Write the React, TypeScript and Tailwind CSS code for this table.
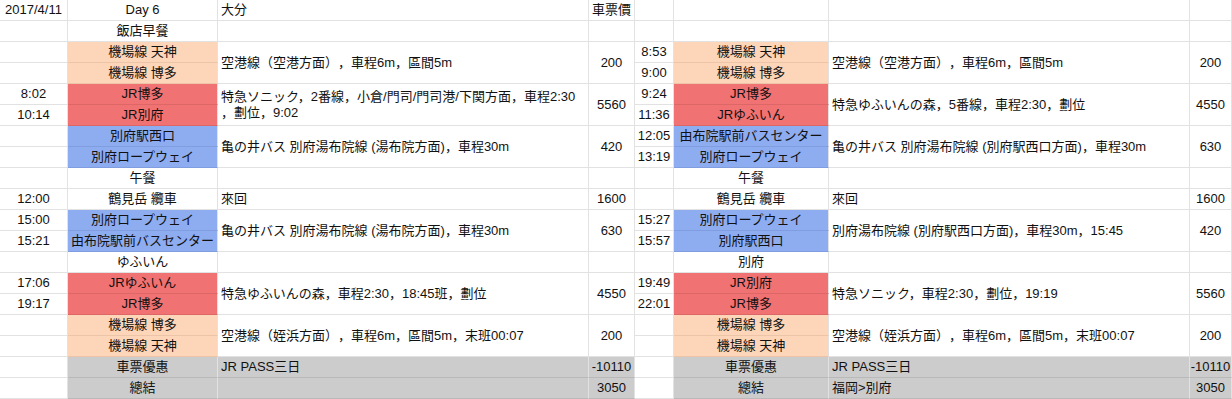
import React from 'react';

type Tone = 'none' | 'peach' | 'red' | 'blue' | 'gray';

type CellProps = {
  text?: React.ReactNode;
  tone?: Tone;
  span?: boolean;
  left?: boolean;
};

const tones: Record<Tone, string> = {
  none: 'bg-white border-[#e2e2e2]',
  peach: 'bg-[#fdd5b8] border-[#ecc4a8]',
  red: 'bg-[#f17272] border-[#dd6666]',
  blue: 'bg-[#8eacf0] border-[#7f9ddf]',
  gray: 'bg-[#cccccc] border-[#b9b9b9]',
};

const Cell = ({ text = '', tone = 'none', span = false, left = false }: CellProps) => (
  <div
    className={`${span ? 'row-span-2' : ''} ${tones[tone]} border-r border-b border-r-[#e2e2e2] flex items-center overflow-hidden whitespace-nowrap leading-[16px] ${
      left ? 'justify-start pl-[3px]' : 'justify-center'
    }`}
  >
    <span className="text-[13px] text-[#111] [text-spacing-trim:space-all]">{text}</span>
  </div>
);

const blank = () => <Cell />;

const Sheet = () => {
  return (
    <div
      className="grid grid-cols-[68px_150px_371px_46px_39px_155px_361px_42px] grid-rows-[repeat(19,21px)] bg-white w-[1232px] h-[399px] overflow-hidden"
      style={{ fontFamily: '"Liberation Sans", Arial, "Noto Sans CJK JP", "Noto Sans CJK TC", sans-serif' }}
    >
      {/* header */}
      <Cell text="2017/4/11" />
      <Cell text="Day 6" />
      <Cell text="大分" left />
      <Cell text="車票價" />
      {blank()}
      {blank()}
      {blank()}
      {blank()}

      {/* breakfast */}
      {blank()}
      <Cell text="飯店早餐" />
      {blank()}
      {blank()}
      {blank()}
      {blank()}
      {blank()}
      {blank()}

      {/* airport line */}
      {blank()}
      <Cell text="機場線 天神" tone="peach" />
      <Cell text="空港線（空港方面），車程6m，區間5m" left span />
      <Cell text="200" span />
      <Cell text="8:53" />
      <Cell text="機場線 天神" tone="peach" />
      <Cell text="空港線（空港方面），車程6m，區間5m" left span />
      <Cell text="200" span />
      {blank()}
      <Cell text="機場線 博多" tone="peach" />
      <Cell text="9:00" />
      <Cell text="機場線 博多" tone="peach" />

      {/* JR */}
      <Cell text="8:02" />
      <Cell text="JR博多" tone="red" />
      <Cell
        text={
          <>
            特急ソニック，2番線，小倉/門司/門司港/下関方面，車程2:30
            <br />
            ，劃位，9:02
          </>
        }
        left
        span
      />
      <Cell text="5560" span />
      <Cell text="9:24" />
      <Cell text="JR博多" tone="red" />
      <Cell text="特急ゆふいんの森，5番線，車程2:30，劃位" left span />
      <Cell text="4550" span />
      <Cell text="10:14" />
      <Cell text="JR別府" tone="red" />
      <Cell text="11:36" />
      <Cell text="JRゆふいん" tone="red" />

      {/* bus */}
      {blank()}
      <Cell text="別府駅西口" tone="blue" />
      <Cell text="亀の井バス 別府湯布院線 (湯布院方面)，車程30m" left span />
      <Cell text="420" span />
      <Cell text="12:05" />
      <Cell text="由布院駅前バスセンター" tone="blue" />
      <Cell text="亀の井バス 別府湯布院線 (別府駅西口方面)，車程30m" left span />
      <Cell text="630" span />
      {blank()}
      <Cell text="別府ロープウェイ" tone="blue" />
      <Cell text="13:19" />
      <Cell text="別府ロープウェイ" tone="blue" />

      {/* lunch */}
      {blank()}
      <Cell text="午餐" />
      {blank()}
      {blank()}
      {blank()}
      <Cell text="午餐" />
      {blank()}
      {blank()}

      {/* ropeway */}
      <Cell text="12:00" />
      <Cell text="鶴見岳 纜車" />
      <Cell text="來回" left />
      <Cell text="1600" />
      {blank()}
      <Cell text="鶴見岳 纜車" />
      <Cell text="來回" left />
      <Cell text="1600" />

      {/* bus back */}
      <Cell text="15:00" />
      <Cell text="別府ロープウェイ" tone="blue" />
      <Cell text="亀の井バス 別府湯布院線 (湯布院方面)，車程30m" left span />
      <Cell text="630" span />
      <Cell text="15:27" />
      <Cell text="別府ロープウェイ" tone="blue" />
      <Cell text="別府湯布院線 (別府駅西口方面)，車程30m，15:45" left span />
      <Cell text="420" span />
      <Cell text="15:21" />
      <Cell text="由布院駅前バスセンター" tone="blue" />
      <Cell text="15:57" />
      <Cell text="別府駅西口" tone="blue" />

      {/* place */}
      {blank()}
      <Cell text="ゆふいん" />
      {blank()}
      {blank()}
      {blank()}
      <Cell text="別府" />
      {blank()}
      {blank()}

      {/* JR back */}
      <Cell text="17:06" />
      <Cell text="JRゆふいん" tone="red" />
      <Cell text="特急ゆふいんの森，車程2:30，18:45班，劃位" left span />
      <Cell text="4550" span />
      <Cell text="19:49" />
      <Cell text="JR別府" tone="red" />
      <Cell text="特急ソニック，車程2:30，劃位，19:19" left span />
      <Cell text="5560" span />
      <Cell text="19:17" />
      <Cell text="JR博多" tone="red" />
      <Cell text="22:01" />
      <Cell text="JR博多" tone="red" />

      {/* airport back */}
      {blank()}
      <Cell text="機場線 博多" tone="peach" />
      <Cell text="空港線（姪浜方面），車程6m，區間5m，末班00:07" left span />
      <Cell text="200" span />
      {blank()}
      <Cell text="機場線 博多" tone="peach" />
      <Cell text="空港線（姪浜方面），車程6m，區間5m，末班00:07" left span />
      <Cell text="200" span />
      {blank()}
      <Cell text="機場線 天神" tone="peach" />
      {blank()}
      <Cell text="機場線 天神" tone="peach" />

      {/* totals */}
      {blank()}
      <Cell text="車票優惠" tone="gray" />
      <Cell text="JR PASS三日" tone="gray" left />
      <Cell text="-10110" tone="gray" />
      {blank()}
      <Cell text="車票優惠" tone="gray" />
      <Cell text="JR PASS三日" tone="gray" left />
      <Cell text="-10110" tone="gray" />
      {blank()}
      <Cell text="總結" tone="gray" />
      <Cell text="" tone="gray" left />
      <Cell text="3050" tone="gray" />
      {blank()}
      <Cell text="總結" tone="gray" />
      <Cell text="福岡>別府" tone="gray" left />
      <Cell text="3050" tone="gray" />
    </div>
  );
};

export default function App() {
  return <Sheet />;
}
